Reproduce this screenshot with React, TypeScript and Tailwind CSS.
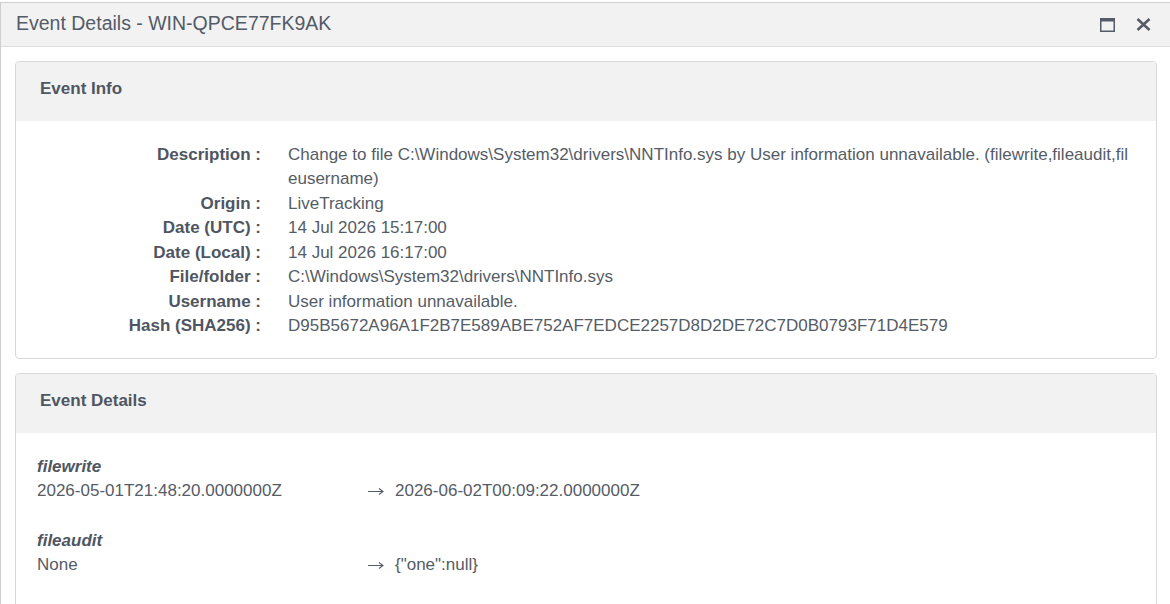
import React from "react";

const infoRows: { label: string; value: string }[] = [
  {
    label: "Description :",
    value:
      "Change to file C:\\Windows\\System32\\drivers\\NNTInfo.sys by User information unnavailable. (filewrite,fileaudit,fileusername)",
  },
  { label: "Origin :", value: "LiveTracking" },
  { label: "Date (UTC) :", value: "14 Jul 2026 15:17:00" },
  { label: "Date (Local) :", value: "14 Jul 2026 16:17:00" },
  { label: "File/folder :", value: "C:\\Windows\\System32\\drivers\\NNTInfo.sys" },
  { label: "Username :", value: "User information unnavailable." },
  {
    label: "Hash (SHA256) :",
    value: "D95B5672A96A1F2B7E589ABE752AF7EDCE2257D8D2DE72C7D0B0793F71D4E579",
  },
];

const changes = [
  { name: "filewrite", from: "2026-05-01T21:48:20.0000000Z", to: "2026-06-02T00:09:22.0000000Z" },
  { name: "fileaudit", from: "None", to: '{"one":null}' },
];

function MaximizeIcon() {
  return (
    <svg width="15" height="14" viewBox="0 0 15 14" fill="none">
      <rect x="0.75" y="0.75" width="13.5" height="12.5" stroke="#555c66" strokeWidth="1.5" />
      <rect x="0" y="0" width="15" height="3.5" fill="#555c66" />
    </svg>
  );
}

function CloseIcon() {
  return (
    <svg width="15" height="13" viewBox="0 0 15 13" fill="none">
      <path d="M1.5 1 L13.5 12 M13.5 1 L1.5 12" stroke="#555c66" strokeWidth="2.6" />
    </svg>
  );
}

// thin right arrow, same as the → glyph in the original
function Arrow() {
  return (
    <svg width="16" height="9" viewBox="0 0 16 9" fill="none" className="inline-block align-middle">
      <path d="M0 4.5 H15 M11 1.5 L15 4.5 L11 7.5" stroke="#555c66" strokeWidth="1.1" />
    </svg>
  );
}

function Panel({ title, children }: { title: string; children: React.ReactNode }) {
  return (
    <div className="rounded-[4px] border border-[#d9d9d9] overflow-hidden">
      <div className="h-[59px] bg-[#f2f2f2] px-6 pt-[14px] text-[17px] font-bold text-[#4f5661]">
        {title}
      </div>
      {children}
    </div>
  );
}

export default function App() {
  return (
    <div className="w-[1170px] h-[604px] overflow-hidden bg-white font-['Liberation_Sans',Arial,sans-serif] text-[#555c66]">
      <div className="h-[2px] bg-white" />
      <div className="flex flex-col h-[602px] border-l border-t border-[#cfcfcf]">
        {/* Title bar */}
        <div className="h-[44px] shrink-0 bg-[#f2f2f2] border-b border-[#dcdcdc] flex items-center justify-between pl-[15px] pr-[19px]">
          <span className="text-[19.5px] text-[#525b67] -mt-[1px]">Event Details - WIN-QPCE77FK9AK</span>
          <div className="flex items-center gap-[21px]">
            <MaximizeIcon />
            <CloseIcon />
          </div>
        </div>

        <div className="flex flex-col gap-[14px] pl-[14px] pr-[13px] pt-[14px]">
          <Panel title="Event Info">
            <div className="grid grid-cols-[245px_1fr] pt-[22px] pb-[19px] pr-[22px] text-[17px] leading-[24.43px]">
              {infoRows.map((r) => (
                <React.Fragment key={r.label}>
                  <div className="text-right font-bold text-[#4f5661] whitespace-nowrap">{r.label}</div>
                  <div className="pl-[27px] break-all">{r.value}</div>
                </React.Fragment>
              ))}
            </div>
          </Panel>

          <Panel title="Event Details">
            <div className="pt-[22px] pb-[40px] pl-[21px] text-[17px] leading-[24.43px]">
              {changes.map((c, i) => (
                <div key={c.name} className={i > 0 ? "mt-[25.5px]" : ""}>
                  <div className="font-bold italic text-[#4f5661]">{c.name}</div>
                  <div className="grid grid-cols-[331px_1fr]">
                    <span>{c.from}</span>
                    <span>
                      <span className="inline-block w-[27px]">
                        <Arrow />
                      </span>
                      {c.to}
                    </span>
                  </div>
                </div>
              ))}
            </div>
          </Panel>
        </div>
      </div>
    </div>
  );
}
